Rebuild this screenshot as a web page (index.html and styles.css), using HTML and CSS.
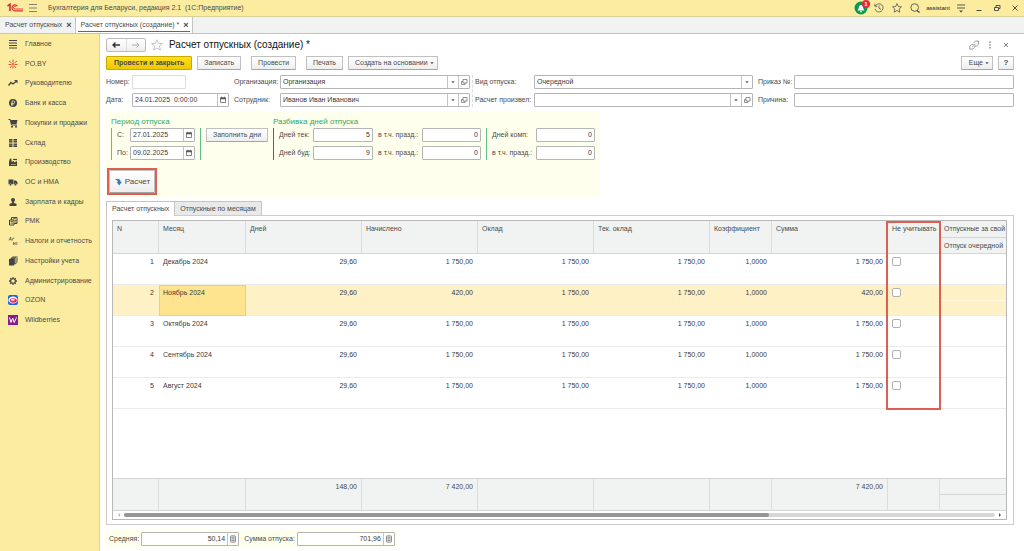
FILE: index.html
```html
<!DOCTYPE html>
<html lang="ru">
<head>
    <meta charset="UTF-8">
    <title>Бухгалтерия для Беларуси, редакция 2.1</title>
    <link rel="stylesheet" href="styles.css">
</head>
<body>

<!-- общие значки -->
<svg class="defs">
    <symbol id="i-cal" viewBox="0 0 8 8"><path d="M1.500 2h5v4.500h-5z" fill="none" stroke="#666" stroke-width=".8"/><path d="M1.200 1.500h5.600v1.700H1.200zM2.300.7h.8v1h-.8zM4.900.7h.8v1h-.8z" fill="#555"/></symbol>
    <symbol id="i-open" viewBox="0 0 8 8"><path d="M3 1.500h4v3.500H3zM3 3.500H1.500v3h3.500V5" fill="none" stroke="#666" stroke-width=".7"/></symbol>
    <symbol id="i-drop" viewBox="0 0 8 8"><path d="M2.300 3.200h3.400L4 5.200z" fill="#555"/></symbol>
    <symbol id="i-calc" viewBox="0 0 8 8"><rect x="1.500" y=".8" width="5" height="6.400" rx=".8" fill="#e4e4e4" stroke="#777" stroke-width=".8"/><path d="M2.500 2.400h3M2.500 4h3M2.500 5.500h3" stroke="#777" stroke-width=".7"/></symbol>
</svg>

<header class="topbar">
    <svg class="logo" viewBox="0 0 17 10"><path d="M0.500 3.200 3 1.200V8" fill="none" stroke="#d8302f" stroke-width="1.600"/><path d="M10.500 3.200A3 3 0 1 0 7.800 7.800H16" fill="none" stroke="#d8302f" stroke-width="1.200"/><path d="M9 3.800A1.400 1.400 0 1 0 8 6H16" fill="none" stroke="#d8302f" stroke-width=".9"/></svg>
    <button class="ico burger" aria-label="Меню"><svg viewBox="0 0 12 12"><path d="M2 2.500h8M2 6h8M2 9.500h8" stroke="#666" stroke-width=".8"/></svg></button>
    <span class="app-name">Бухгалтерия для Беларуси, редакция 2.1&nbsp; (1С:Предприятие)</span>
    <button class="ico bell" aria-label="Оповещения">
        <svg viewBox="0 0 14 14"><circle cx="7" cy="7" r="6.500" fill="#0c9a52"/><path d="M3.500 9.500c1.500-1 1-5.500 3.500-5.500s2 4.500 3.500 5.500zM6 10.200h2v1H6z" fill="#fff"/></svg>
        <span class="count">1</span>
    </button>
    <button class="ico" aria-label="История"><svg viewBox="0 0 12 12"><path d="M2.300 4A4.100 4.100 0 1 1 2 7M1.800 1.800v2.500h2.500M6 3.500v2.700l2 1.200" fill="none" stroke="#555" stroke-width=".8"/></svg></button>
    <button class="ico" aria-label="Избранное"><svg viewBox="0 0 12 12"><path d="M6 1.500l1.300 3 3.200.3-2.400 2.200.7 3.200L6 8.500l-2.800 1.700.7-3.200L1.500 4.800l3.200-.3z" fill="none" stroke="#555" stroke-width=".8"/></svg></button>
    <button class="ico" aria-label="Поиск"><svg viewBox="0 0 12 12"><circle cx="5.700" cy="5.500" r="3.800" fill="none" stroke="#555" stroke-width=".9"/><path d="M8 8.500l2.500 2" stroke="#444" stroke-width="1.200"/></svg></button>
    <span class="user">assistant</span>
    <button class="ico" aria-label="Настройки"><svg viewBox="0 0 12 12"><path d="M2 3h8M2 6h8" stroke="#444" stroke-width=".9"/><path d="M4 8.500h4L6 10.500z" fill="#444"/></svg></button>
    <button class="ico" aria-label="Свернуть"><svg viewBox="0 0 12 12"><path d="M3.500 8.500h5" stroke="#444"/></svg></button>
    <button class="ico" aria-label="Развернуть"><svg viewBox="0 0 12 12"><path d="M3.500 5.500h4v3h-4zM5 5.500v-2h4v3H7.500" fill="none" stroke="#444" stroke-width=".9"/></svg></button>
    <button class="ico" aria-label="Закрыть"><svg viewBox="0 0 12 12"><path d="M3.500 3.500l5 5M8.500 3.500l-5 5" stroke="#444" stroke-width=".9"/></svg></button>
</header>

<nav class="windows">
    <div class="window">Расчет отпускных <button class="close" aria-label="Закрыть вкладку">×</button></div>
    <div class="window active">Расчет отпускных (создание) * <button class="close" aria-label="Закрыть вкладку">×</button></div>
</nav>

<div class="layout">
    <nav class="sidebar">
        <div class="sections">
            <a href="#"><svg viewBox="0 0 10 10"><path d="M1 1.500h8M1 4h8M1 6.500h8M1 9h8" stroke="#444" stroke-width="1.200"/></svg>Главное</a>
            <a href="#"><svg viewBox="0 0 10 10"><path d="M5 .5v3M5 6.500v3M1 2l2.500 2M9 2L6.500 4M.5 5.500h3M6.500 5.500h3M2 9l2-2.500M8 9L6 6.500" stroke="#e0543a"/><circle cx="5" cy="5" r="1" fill="#e0543a"/></svg>PO.BY</a>
            <a href="#"><svg viewBox="0 0 10 10"><path d="M.5 7.500l2.500-3 2 1.500L8 3.500" fill="none" stroke="#444" stroke-width="1.300"/><path d="M6 2h3.500v3.500z" fill="#444"/></svg>Руководителю</a>
            <a href="#"><svg viewBox="0 0 10 10"><circle cx="5" cy="5" r="4" fill="#444"/><path d="M4 8V3h1.500a1.200 1.200 0 0 1 0 2.500H3M3 6.700h2.500" fill="none" stroke="#fcec9f" stroke-width=".8"/></svg>Банк и касса</a>
            <a href="#"><svg viewBox="0 0 10 10"><path d="M.5 1.500h1.700L3.500 7H9" fill="none" stroke="#444"/><path d="M2.300 2H9.500L8.500 6H3.300z" fill="#444"/><circle cx="4" cy="8.700" r="1" fill="#444"/><circle cx="8" cy="8.700" r="1" fill="#444"/></svg>Покупки и продажи</a>
            <a href="#"><svg viewBox="0 0 10 10"><path d="M1 1h3.500v3.500H1zM5.500 1H9v3.500H5.500zM1 5.500h3.500V9H1zM5.500 5.500H9V9H5.500z" fill="#444"/><path d="M1 2.700h8M1 7.200h8" stroke="#fcec9f" stroke-width=".4"/></svg>Склад</a>
            <a href="#"><svg viewBox="0 0 10 10"><path d="M1 9V4.500l1-3h1.200l.6 3.500L6 3.800V5.500L9 4v5z" fill="#444"/><path d="M5 2.500h4" stroke="#444" stroke-width="1.200"/><path d="M3 7.500h5" stroke="#fcec9f" stroke-width=".5"/></svg>Производство</a>
            <a href="#"><svg viewBox="0 0 10 10"><path d="M.5 2.500h5v4.700h-5zM6 3.500h2l1.500 1.800v1.900H6z" fill="#444"/><circle cx="2.500" cy="7.700" r="1.100" fill="#444" stroke="#fcec9f" stroke-width=".4"/><circle cx="7.500" cy="7.700" r="1.100" fill="#444" stroke="#fcec9f" stroke-width=".4"/></svg>ОС и НМА</a>
            <a href="#"><svg viewBox="0 0 10 10"><circle cx="5" cy="3" r="2" fill="#444"/><path d="M4 4h2v2l2.500.8V9h-7V6.800L4 6z" fill="#444"/></svg>Зарплата и кадры</a>
            <a href="#"><svg viewBox="0 0 10 10"><path d="M1.500 4h4.500v5H1.500zM3.500 4V1.500h5.500v6H6" fill="none" stroke="#444"/><path d="M2.500 5.500h2.500M2.500 7.200h2.500M5 2.800h3M7 4.500h1.500M7 6h1.500" stroke="#444" stroke-width=".8"/></svg>РМК</a>
            <a href="#"><svg viewBox="0 0 10 10"><path d="M1 4.500L2.500 1l.8 3.500M1.500 3.300h1.800M4.300 4.500L5 2h1.200M5.500 6v3M5.500 7.500h1.500M8.800 6v3M7.200 6.200V9" fill="none" stroke="#555" stroke-width=".7"/></svg>Налоги и отчетность</a>
            <a href="#"><svg viewBox="0 0 10 10"><path d="M1 3h5v6.500H1z" fill="#444"/><path d="M3.500 2.500v-.8h4.500v6H7M2.500 2.500h4v6" fill="none" stroke="#444" stroke-width=".9"/><path d="M4.500.7h4.700v6" fill="none" stroke="#444" stroke-width=".6"/></svg>Настройки учета</a>
            <a href="#"><svg viewBox="0 0 10 10"><path d="M5 1v8M1 5h8M2.200 2.200l5.600 5.600M7.800 2.200L2.200 7.800" stroke="#444" stroke-width="1.300"/><circle cx="5" cy="5" r="2.800" fill="#444"/><circle cx="5" cy="5" r="1.800" fill="#fcec9f"/></svg>Администрирование</a>
            <a href="#"><svg viewBox="0 0 10 10"><rect width="10" height="10" rx="2" fill="#1b63f2"/><ellipse cx="5" cy="5" rx="4.600" ry="3.600" fill="#fff"/><ellipse cx="5.300" cy="5.500" rx="3.500" ry="2.200" fill="#f0245a"/><ellipse cx="4.800" cy="4.800" rx="2" ry=".9" fill="#fff"/></svg>OZON</a>
            <a href="#"><svg viewBox="0 0 10 10"><rect width="10" height="10" fill="#8a1b8f"/><path d="M1.500 2.500l1.500 5 1.700-4.500 1.500 4.500L8.500 2.500" fill="none" stroke="#fff"/></svg>Wildberries</a>
        </div>
    </nav>

    <main class="form">
        <div class="title-row">
            <div class="history">
                <button aria-label="Назад"><svg viewBox="0 0 12 8"><path d="M10 4H3M5.500 1.500L3 4l2.500 2.500" fill="none" stroke="#333" stroke-width="1.400"/></svg></button>
                <button aria-label="Вперед"><svg viewBox="0 0 12 8"><path d="M2 4h7M6.500 1.500L9 4 6.500 6.500" fill="none" stroke="#aaa"/></svg></button>
            </div>
            <svg class="fav" viewBox="0 0 12 12"><path d="M6 .8l1.500 3.500 3.900.3-3 2.500 1 3.900L6 9l-3.400 2 1-3.900-3-2.500 3.900-.3z" fill="none" stroke="#aaa" stroke-width=".7"/></svg>
            <h1>Расчет отпускных (создание) *</h1>
            <button class="ico" aria-label="Ссылка"><svg viewBox="0 0 12 12"><path d="M5.500 4L7.500 2H10.500v3.200L8.500 7H7M5.500 5.500H3.500L1.800 7.200v2.900h3L6.800 8V6.800M4.500 7.800l3.300-3.300" fill="none" stroke="#777" stroke-width=".7"/></svg></button>
            <button class="ico" aria-label="Еще действия"><svg viewBox="0 0 12 12"><path d="M5.500 2.500h1v1.500h-1zM5.500 5.300h1v1.500h-1zM5.500 8h1v1.500h-1z" fill="#555"/></svg></button>
            <button class="ico" aria-label="Закрыть форму"><svg viewBox="0 0 12 12"><path d="M4 4l4 4M8 4L4 8" stroke="#666" stroke-width=".8"/></svg></button>
        </div>

        <div class="commands">
            <div class="group">
                <button class="btn primary">Провести и закрыть</button>
                <button class="btn">Записать</button>
            </div>
            <button class="btn">Провести</button>
            <div class="group">
                <button class="btn">Печать</button>
                <button class="btn with-drop">Создать на основании <svg><use href="#i-drop"/></svg></button>
            </div>
            <div class="group right">
                <button class="btn with-drop">Еще <svg><use href="#i-drop"/></svg></button>
                <button class="btn help">?</button>
            </div>
        </div>

        <div class="header-fields">
            <div class="pairs p1">
                <label for="num">Номер:</label>
                <div class="field muted short"><input id="num" type="text"></div>
                <label for="date">Дата:</label>
                <div class="field"><input id="date" type="text" value="24.01.2025  0:00:00"><button aria-label="Календарь"><svg><use href="#i-cal"/></svg></button></div>
            </div>
            <div class="pairs p2">
                <label for="org">Организация:</label>
                <div class="field"><select id="org"><option>Организация</option></select><span class="part"><svg><use href="#i-drop"/></svg></span><button aria-label="Открыть"><svg><use href="#i-open"/></svg></button></div>
                <label for="emp">Сотрудник:</label>
                <div class="field"><select id="emp"><option>Иванов Иван Иванович</option></select><span class="part"><svg><use href="#i-drop"/></svg></span><button aria-label="Открыть"><svg><use href="#i-open"/></svg></button></div>
            </div>
            <div class="pairs p3">
                <label for="kind">Вид отпуска:</label>
                <div class="field"><select id="kind"><option>Очередной</option></select><span class="part"><svg><use href="#i-drop"/></svg></span></div>
                <label for="who">Расчет произвел:</label>
                <div class="field"><select id="who"><option></option></select><span class="part"><svg><use href="#i-drop"/></svg></span><button aria-label="Открыть"><svg><use href="#i-open"/></svg></button></div>
            </div>
            <div class="pairs p4">
                <label for="order">Приказ №:</label>
                <div class="field"><input id="order" type="text"></div>
                <label for="reason">Причина:</label>
                <div class="field"><input id="reason" type="text"></div>
            </div>
        </div>

        <section class="period">
            <div class="period-groups">
                <div>
                    <h2>Период отпуска</h2>
                    <div class="cols">
                        <div class="pairs bar dates">
                            <label for="from">С:</label>
                            <div class="field"><input id="from" type="text" value="27.01.2025"><button aria-label="Календарь"><svg><use href="#i-cal"/></svg></button></div>
                            <label for="to">По:</label>
                            <div class="field"><input id="to" type="text" value="09.02.2025"><button aria-label="Календарь"><svg><use href="#i-cal"/></svg></button></div>
                        </div>
                        <div class="bar fill"><button class="btn">Заполнить дни</button></div>
                    </div>
                </div>
                <div>
                    <h2>Разбивка дней отпуска</h2>
                    <div class="cols">
                        <div class="pairs bar dark days">
                            <label for="cur">Дней тек:</label>
                            <div class="field num"><input id="cur" type="text" value="5"></div>
                            <label for="fut">Дней буд:</label>
                            <div class="field num"><input id="fut" type="text" value="9"></div>
                        </div>
                        <div class="pairs holidays">
                            <label for="cur-h">в т.ч. празд.:</label>
                            <div class="field num"><input id="cur-h" type="text" value="0"></div>
                            <label for="fut-h">в т.ч. празд.:</label>
                            <div class="field num"><input id="fut-h" type="text" value="0"></div>
                        </div>
                        <div class="pairs bar comp">
                            <label for="comp">Дней комп:</label>
                            <div class="field num"><input id="comp" type="text" value="0"></div>
                            <label for="comp-h">в т.ч. празд.:</label>
                            <div class="field num"><input id="comp-h" type="text" value="0"></div>
                        </div>
                    </div>
                </div>
            </div>
            <div class="marked">
                <button class="btn calc"><svg viewBox="0 0 8 8"><path d="M1 1.500L3 .8c2.500 0 3.500 1 3.500 3H8L5.200 7.500 2.500 3.800H4C4 2.500 2.500 2 1 1.500z" fill="#3f78b5"/></svg>Расчет</button>
            </div>
        </section>

        <div class="tabs">
            <button class="tab active">Расчет отпускных</button>
            <button class="tab">Отпускные по месяцам</button>
        </div>
        <div class="panel">
            <div class="grid">
                <table>
                    <colgroup>
                        <col class="c-n"><col class="c-month"><col class="c-sum"><col class="c-sum"><col class="c-sum"><col class="c-sum"><col class="c-coef"><col class="c-sum"><col class="c-skip"><col>
                    </colgroup>
                    <thead>
                    <tr>
                        <th rowspan="2">N</th>
                        <th rowspan="2">Месяц</th>
                        <th rowspan="2">Дней</th>
                        <th rowspan="2">Начислено</th>
                        <th rowspan="2">Оклад</th>
                        <th rowspan="2">Тек. оклад</th>
                        <th rowspan="2">Коэффициент</th>
                        <th rowspan="2">Сумма</th>
                        <th rowspan="2" class="marked-col">Не учитывать</th>
                        <th>Отпускные за свой с</th>
                    </tr>
                    <tr>
                        <th class="sub">Отпуск очередной</th>
                    </tr>
                    </thead>
                    <tbody>
                    <tr><td>1</td><td class="month">Декабрь 2024</td><td>29,60</td><td>1 750,00</td><td>1 750,00</td><td>1 750,00</td><td>1,0000</td><td>1 750,00</td><td class="check"><input type="checkbox" aria-label="Не учитывать декабрь"></td><td></td></tr>
                    <tr class="current"><td>2</td><td class="month selected">Ноябрь 2024</td><td>29,60</td><td>420,00</td><td>1 750,00</td><td>1 750,00</td><td>1,0000</td><td>420,00</td><td class="check"><input type="checkbox" aria-label="Не учитывать ноябрь"></td><td class="split"></td></tr>
                    <tr><td>3</td><td class="month">Октябрь 2024</td><td>29,60</td><td>1 750,00</td><td>1 750,00</td><td>1 750,00</td><td>1,0000</td><td>1 750,00</td><td class="check"><input type="checkbox" aria-label="Не учитывать октябрь"></td><td></td></tr>
                    <tr><td>4</td><td class="month">Сентябрь 2024</td><td>29,60</td><td>1 750,00</td><td>1 750,00</td><td>1 750,00</td><td>1,0000</td><td>1 750,00</td><td class="check"><input type="checkbox" aria-label="Не учитывать сентябрь"></td><td></td></tr>
                    <tr><td>5</td><td class="month">Август 2024</td><td>29,60</td><td>1 750,00</td><td>1 750,00</td><td>1 750,00</td><td>1,0000</td><td>1 750,00</td><td class="check"><input type="checkbox" aria-label="Не учитывать август"></td><td></td></tr>
                    <tr class="empty"><td colspan="10"></td></tr>
                    </tbody>
                    <tfoot>
                    <tr>
                        <td rowspan="2"></td><td rowspan="2"></td><td rowspan="2">148,00</td><td rowspan="2">7 420,00</td><td rowspan="2"></td><td rowspan="2"></td><td rowspan="2"></td><td rowspan="2">7 420,00</td><td rowspan="2"></td><td></td>
                    </tr>
                    <tr><td></td></tr>
                    </tfoot>
                </table>
                <div class="scroll">
                    <span class="arrow left"></span>
                    <div class="track"><div class="thumb"></div></div>
                    <span class="arrow"></span>
                </div>
            </div>
        </div>

        <div class="totals">
            <label for="avg">Средняя:</label>
            <div class="field num"><input id="avg" type="text" value="50,14"><button aria-label="Калькулятор"><svg><use href="#i-calc"/></svg></button></div>
            <label for="total">Сумма отпуска:</label>
            <div class="field num"><input id="total" type="text" value="701,96"><button aria-label="Калькулятор"><svg><use href="#i-calc"/></svg></button></div>
        </div>
    </main>
</div>

</body>
</html>
```

FILE: styles.css
```css
* {
    box-sizing: border-box;
    margin: 0;
    padding: 0;
}

body {
    display: flex;
    flex-direction: column;
    min-height: 100vh;
    font: 7px/10px "Liberation Sans", Arial, sans-serif;
    color: #4a4a4a;
    background: #fff;
}

button, input, select {
    font: inherit;
    color: inherit;
    border: 0;
    background: none;
    outline: none;
}

svg {
    display: block;
    flex: none;
}

.defs {
    position: absolute;
    width: 0;
    height: 0;
}

/* верхняя панель */
.topbar {
    display: flex;
    align-items: center;
    height: 17px;
    padding-left: 7px;
    background: #fcec9f;
    border-bottom: 1px solid #d9cf9a;
}

.logo {
    width: 17px;
    height: 10px;
}

.ico {
    display: flex;
    justify-content: center;
    width: 18px;
}

.ico svg {
    width: 12px;
    height: 12px;
}

.app-name {
    flex: 1;
    padding-left: 6px;
}

.bell {
    position: relative;
}

.bell svg {
    width: 14px;
    height: 14px;
}

.count {
    position: absolute;
    top: -1px;
    right: 0;
    width: 8px;
    height: 8px;
    border-radius: 4px;
    font-size: 6px;
    line-height: 8px;
    font-weight: bold;
    color: #fff;
    background: #e8253b;
}

.user {
    width: 28px;
    font-size: 6px;
    text-align: center;
    color: #222;
}

/* открытые окна */
.windows {
    display: flex;
    height: 17px;
    background: #f1f3f2;
    border-bottom: 1px solid #c4c4c4;
}

.window {
    display: flex;
    align-items: center;
    gap: 4px;
    padding: 0 3px 0 5px;
    border-right: 1px solid #c4c4c4;
}

.window.active {
    background: linear-gradient(#0c9a52, #0c9a52) center 14px / calc(100% - 4px) 1px no-repeat #fff;
}

.close {
    font-size: 9px;
    font-weight: bold;
    line-height: 10px;
}

.layout {
    display: flex;
    flex: 1;
}

/* разделы */
.sidebar {
    flex: none;
    width: 100px;
    background: #fcec9f;
    border-right: 1px solid #d9d2ac;
}

.sections {
    display: flex;
    flex-direction: column;
    height: 296px;
}

.sidebar a {
    display: flex;
    flex: 1;
    align-items: center;
    gap: 7px;
    padding-left: 8px;
    color: inherit;
    text-decoration: none;
}

.sidebar svg {
    width: 10px;
    height: 10px;
}

.form {
    flex: 1;
    min-width: 0;
    padding: 4px 10px 3px 6px;
}

.title-row {
    display: flex;
    align-items: center;
    height: 14px;
}

.history {
    display: flex;
    width: 40px;
    height: 14px;
    border: 1px solid #bbb;
    border-radius: 2px;
    background: linear-gradient(#fff, #eee);
}

.history button {
    display: flex;
    flex: 1;
    align-items: center;
    justify-content: center;
}

.history button + button {
    border-left: 1px solid #ddd;
}

.history svg {
    width: 12px;
    height: 8px;
}

.fav {
    width: 12px;
    height: 12px;
    margin: 0 6px 0 5px;
}

h1 {
    flex: 1;
    font-size: 10px;
    font-weight: normal;
    line-height: 14px;
    color: #111;
}

.title-row .ico {
    width: 16px;
}

/* кнопки */
.commands {
    display: flex;
    gap: 10px;
    margin: 4px 0 5px;
}

.group {
    display: flex;
    gap: 5px;
}

.right {
    margin-left: auto;
}

.btn {
    display: flex;
    align-items: center;
    justify-content: center;
    height: 14px;
    padding: 0 6px;
    border: 1px solid #c0c0c0;
    border-bottom-color: #a5a5a5;
    border-radius: 1px;
    background: linear-gradient(#fff, #eee);
    white-space: nowrap;
}

.primary {
    padding: 0 7px;
    font-weight: bold;
    border-color: #c9a800;
    background: linear-gradient(#ffe01a, #efc800);
}

.with-drop {
    padding-right: 1px;
}

.with-drop svg {
    width: 8px;
    height: 8px;
}

.right .with-drop {
    padding-left: 7px;
}

.help {
    width: 16px;
    padding: 0;
    font-size: 8px;
    font-weight: bold;
}

/* поля */
.header-fields {
    display: grid;
    grid-template-columns: 123px 236fr 278fr 256fr;
    gap: 5px;
}

.pairs {
    display: grid;
    grid-template-columns: 26px 1fr;
    gap: 4px 0;
    align-items: center;
}

.pairs label {
    white-space: nowrap;
}

.p2 {
    grid-template-columns: 46px 1fr;
}

.p3 {
    position: relative;
    grid-template-columns: 59px 1fr;
}

/* пунктир между колонками */
.p3::before {
    content: "";
    position: absolute;
    top: 0;
    bottom: 0;
    left: -3px;
    border-left: 1px dashed #ddd;
}

.p4 {
    grid-template-columns: 36px 1fr;
}

.field {
    display: flex;
    height: 14px;
    min-width: 0;
    border: 1px solid #b5b5b5;
    border-radius: 1px;
    background: #fff;
    color: #3a3a3a;
}

.field input, .field select {
    flex: 1;
    width: 100%;
    min-width: 0;
    padding: 0 2px;
    appearance: none;
    white-space: pre;
}

.field button, .part {
    display: flex;
    flex: none;
    align-items: center;
    justify-content: center;
    width: 11px;
    border-left: 1px solid #c4c4c4;
}

.field svg {
    width: 8px;
    height: 8px;
}

.muted {
    border-color: #ddd;
}

.short {
    width: 54px;
}

.num input {
    text-align: right;
}

/* период отпуска */
.period {
    width: 494px;
    margin-top: 4px;
    padding: 5px 5px 2px;
    background: #ffffee;
}

.period-groups {
    display: flex;
    gap: 5px;
}

h2 {
    font-size: 8px;
    font-weight: normal;
    line-height: 12px;
    color: #2fa866;
}

.cols {
    display: flex;
    gap: 5px;
}

.bar {
    padding-left: 5px;
    border-left: 1px solid #5dbf8a;
}

.dark {
    border-left-color: #12904f;
}

.dates {
    grid-template-columns: 13px 65px;
}

.fill .btn {
    width: 62px;
}

.days {
    grid-template-columns: 34px 60px;
}

.holidays {
    grid-template-columns: 44px 59px;
}

.comp {
    grid-template-columns: 44px 59px;
}

.marked {
    width: 50px;
    margin: 8px 0 0 -4px;
    border: 2px solid #dc5f52;
}

.calc {
    gap: 3px;
    width: 100%;
    height: 23px;
    padding: 0;
    font-size: 8px;
}

.calc svg {
    width: 8px;
    height: 8px;
}

/* вкладки и таблица */
.tabs {
    display: flex;
    margin-top: 4px;
}

.tab {
    height: 14px;
    padding: 0 5px;
    border: 1px solid #c4c4c4;
    border-bottom: 0;
    background: #e9e9e9;
}

.tab + .tab {
    border-left: 0;
}

.tab.active {
    height: 15px;
    margin-bottom: -1px;
    background: #fff;
    z-index: 1;
}

.panel {
    padding: 4px 6px 4px 5px;
    border: 1px solid #ccc;
}

.grid {
    border: 1px solid #b8b8b8;
    overflow: hidden;
}

table {
    width: 100%;
    table-layout: fixed;
    border-collapse: separate;
    border-spacing: 0;
}

.c-n {
    width: 46px;
}

.c-month {
    width: 87px;
}

.c-sum {
    width: 116px;
}

.c-coef {
    width: 62px;
}

.c-skip {
    width: 52px;
}

th, td {
    padding: 3px 4px;
    vertical-align: top;
    white-space: nowrap;
    border-bottom: 1px solid #ebebeb;
}

th, tfoot td {
    height: 16px;
    font-weight: normal;
    text-align: left;
    background: #f1f3f2;
    border-right: 1px solid #dcdcdc;
    border-bottom: 1px solid #d5d5d5;
}

th:last-child {
    padding-right: 0;
    border-right: 0;
}

tfoot td:last-child {
    border-right: 0;
}

th.sub {
    padding-bottom: 2px;
}

td, tfoot td {
    padding-right: 5px;
    text-align: right;
}

tfoot td {
    padding: 3px 4px 2px;
}

tbody td {
    height: 31px;
    color: #3a3a3a;
}

.month {
    text-align: left;
}

.current td {
    background: #fff1c6;
}

.current .selected {
    padding: 2px 3px;
    background: #ffe48f;
    border: 1px solid #f8d925;
}

.current .split {
    background: linear-gradient(#fff9e4, #fff9e4) 0 15px / 100% 1px no-repeat #fff1c6;
}

.check {
    text-align: left;
}

.check input {
    display: block;
    width: 9px;
    height: 9px;
    appearance: none;
    background: #fff;
    border: 1px solid #b0b0b0;
    border-radius: 2px;
}

.empty td {
    height: 70px;
    border-bottom-color: #d5d5d5;
}

/* рамка вокруг колонки */
.marked-col {
    position: relative;
}

.marked-col::after {
    content: "";
    position: absolute;
    top: 0;
    left: -2px;
    right: -2px;
    height: 185px;
    border: 2px solid #dc5f52;
}

.scroll {
    display: flex;
    align-items: center;
    gap: 4px;
    height: 8px;
    padding: 0 5px;
}

.track {
    flex: 1;
    height: 4px;
    border-radius: 2px;
    background: #d6d6d6;
}

.thumb {
    width: 74%;
    height: 4px;
    border-radius: 2px;
    background: #969696;
}

.arrow {
    border: 2px solid transparent;
    border-left-color: #555;
    border-right-width: 0;
}

.arrow.left {
    border: 2px solid transparent;
    border-right-color: #bbb;
    border-left-width: 0;
}

/* итоги */
.totals {
    display: flex;
    align-items: center;
    width: max-content;
    margin-top: 5px;
    padding: 2px 2px 2px 3px;
    background: #ffffee;
}

.totals label {
    padding-right: 2px;
}

.totals .field {
    width: 98px;
}

.totals .field + label {
    padding-left: 5px;
}
```
